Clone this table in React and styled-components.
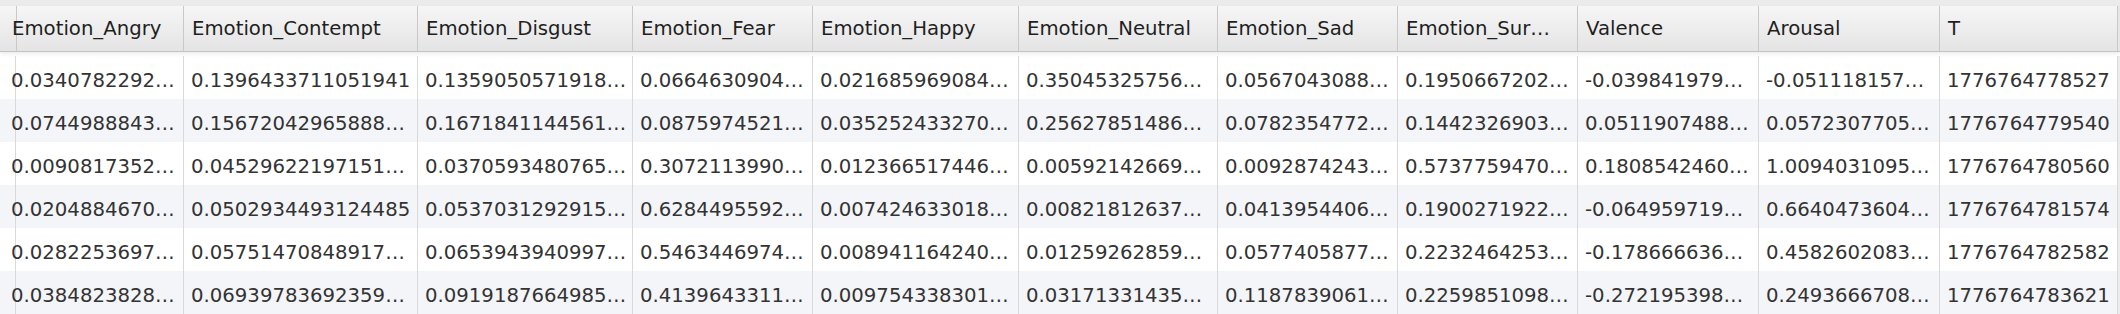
import React from 'react';
import styled, { createGlobalStyle } from 'styled-components';

const GlobalStyle = createGlobalStyle`
  html, body {
    margin: 0;
    padding: 0;
    background: #ffffff;
    overflow: hidden;
  }
  * {
    box-sizing: border-box;
  }
`;

// column widths measured from the reference, border included
const COLUMN_WIDTHS = [4, 180, 234, 215, 180, 206, 199, 180, 180, 181, 181, 178];
const GRID = COLUMN_WIDTHS.map(w => `${w}px`).join(' ') + ' 1fr';

const columns = [
  'Emotion_Angry',
  'Emotion_Contempt',
  'Emotion_Disgust',
  'Emotion_Fear',
  'Emotion_Happy',
  'Emotion_Neutral',
  'Emotion_Sad',
  'Emotion_Sur…',
  'Valence',
  'Arousal',
  'T',
];

const rows = [
  ['0.0340782292…', '0.1396433711051941', '0.1359050571918…', '0.0664630904…', '0.021685969084…', '0.35045325756…', '0.0567043088…', '0.1950667202…', '-0.039841979…', '-0.051118157…', '1776764778527'],
  ['0.0744988843…', '0.15672042965888…', '0.1671841144561…', '0.0875974521…', '0.035252433270…', '0.25627851486…', '0.0782354772…', '0.1442326903…', '0.0511907488…', '0.0572307705…', '1776764779540'],
  ['0.0090817352…', '0.04529622197151…', '0.0370593480765…', '0.3072113990…', '0.012366517446…', '0.00592142669…', '0.0092874243…', '0.5737759470…', '0.1808542460…', '1.0094031095…', '1776764780560'],
  ['0.0204884670…', '0.0502934493124485', '0.0537031292915…', '0.6284495592…', '0.007424633018…', '0.00821812637…', '0.0413954406…', '0.1900271922…', '-0.064959719…', '0.6640473604…', '1776764781574'],
  ['0.0282253697…', '0.05751470848917…', '0.0653943940997…', '0.5463446974…', '0.008941164240…', '0.01259262859…', '0.0577405877…', '0.2232464253…', '-0.178666636…', '0.4582602083…', '1776764782582'],
  ['0.0384823828…', '0.06939783692359…', '0.0919187664985…', '0.4139643311…', '0.009754338301…', '0.03171331435…', '0.1187839061…', '0.2259851098…', '-0.272195398…', '0.2493666708…', '1776764783621'],
];

const Table = styled.div`
  width: 2120px;
  height: 314px;
  display: flex;
  flex-direction: column;
  background: #ebebeb;
  font-family: "DejaVu Sans", Verdana, sans-serif;
  font-size: 19.7px;
  overflow: hidden;
`;

const TopBand = styled.div`
  height: 6px;
  flex: none;
  background: #ebebeb;
`;

const HeaderRow = styled.div`
  display: grid;
  grid-template-columns: ${GRID};
  height: 46px;
  flex: none;
  position: relative;
  z-index: 1;
  background: linear-gradient(#f6f6f6, #e4e4e4);
  border-bottom: 1px solid #c2c2c2;
  box-shadow: 0 2px 4px rgba(0, 0, 0, 0.08);
`;

const HeaderCell = styled.div`
  display: flex;
  align-items: center;
  padding: 0 8px;
  color: #1f1f1f;
  white-space: nowrap;
  overflow: hidden;
  border-right: ${p => (p.$filler ? 'none' : '1px solid #c9c9c9')};
  background: ${p => (p.$filler ? '#e6e6e6' : 'transparent')};
`;

const Body = styled.div`
  flex: 1;
  padding-top: 4px;
  background: #ffffff;
`;

const Row = styled.div`
  display: grid;
  grid-template-columns: ${GRID};
  height: 43px;
  background: ${p => (p.$odd ? '#f4f5f9' : '#ffffff')};
`;

const Cell = styled.div`
  display: flex;
  align-items: center;
  padding: 5px 8px 0 7px;
  color: #333333;
  white-space: nowrap;
  overflow: hidden;
  border-right: ${p => (p.$filler ? 'none' : '1px solid #d9d9d9')};
  background: ${p => (p.$filler ? '#ececec' : 'transparent')};
`;

export default function App() {
  return (
    <>
      <GlobalStyle />
      <Table>
        <TopBand />
        <HeaderRow>
          <HeaderCell />
          {columns.map(name => (
            <HeaderCell key={name}>{name}</HeaderCell>
          ))}
          <HeaderCell $filler />
        </HeaderRow>
        <Body>
          {rows.map((values, i) => (
            <Row key={values[10]} $odd={i % 2 === 1}>
              <Cell />
              {values.map((v, j) => (
                <Cell key={j}>{v}</Cell>
              ))}
              <Cell $filler />
            </Row>
          ))}
        </Body>
      </Table>
    </>
  );
}
